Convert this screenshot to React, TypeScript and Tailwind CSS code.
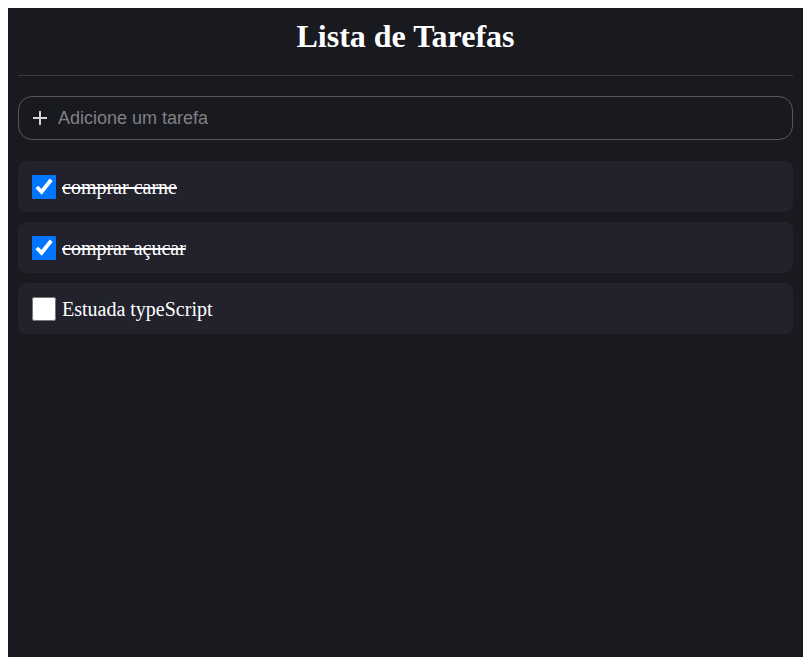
import { useState } from 'react';

interface Task {
  id: number;
  title: string;
  done: boolean;
}

const initialTasks: Task[] = [
  { id: 1, title: 'comprar carne', done: true },
  { id: 2, title: 'comprar açucar', done: true },
  { id: 3, title: 'Estuada typeScript', done: false },
];

export default function App() {
  const [tasks, setTasks] = useState<Task[]>(initialTasks);
  const [text, setText] = useState('');

  const toggle = (id: number) =>
    setTasks((prev) => prev.map((t) => (t.id === id ? { ...t, done: !t.done } : t)));

  return (
    <div className="bg-white p-2 pb-0">
      <div className="min-h-screen bg-[#191920] p-[10px]">
        <h1
          className="border-b border-[#3b3b40] pb-5 text-center text-[32px] font-bold leading-[37px] text-white"
          style={{ fontFamily: '"Liberation Serif", "Times New Roman", serif' }}
        >
          Lista de Tarefas
        </h1>

        <div className="mt-5 flex h-[44px] items-center gap-[10px] rounded-[14px] border border-[#56565c] px-[13px]">
          <svg width="16" height="16" viewBox="0 0 16 16" className="shrink-0">
            <path d="M8 1v14M1 8h14" stroke="#d4d4d4" strokeWidth="2" />
          </svg>
          <input
            value={text}
            onChange={(e) => setText(e.target.value)}
            placeholder="Adicione um tarefa"
            className="w-full bg-transparent text-[18px] text-white outline-none placeholder:text-[#808085]"
            style={{ fontFamily: '"Liberation Sans", Arial, sans-serif' }}
          />
        </div>

        <ul className="mt-[21px] flex flex-col gap-[10px]">
          {tasks.map((task) => (
            <li
              key={task.id}
              className="flex h-[51px] items-center gap-[6px] rounded-lg bg-[#22222d] px-[14px]"
            >
              <input
                type="checkbox"
                checked={task.done}
                onChange={() => toggle(task.id)}
                className="m-0 h-6 w-6 shrink-0"
              />
              <span
                className={`text-[20px] text-white ${task.done ? 'line-through' : ''}`}
                style={{ fontFamily: '"Liberation Serif", "Times New Roman", serif' }}
              >
                {task.title}
              </span>
            </li>
          ))}
        </ul>
      </div>
    </div>
  );
}
